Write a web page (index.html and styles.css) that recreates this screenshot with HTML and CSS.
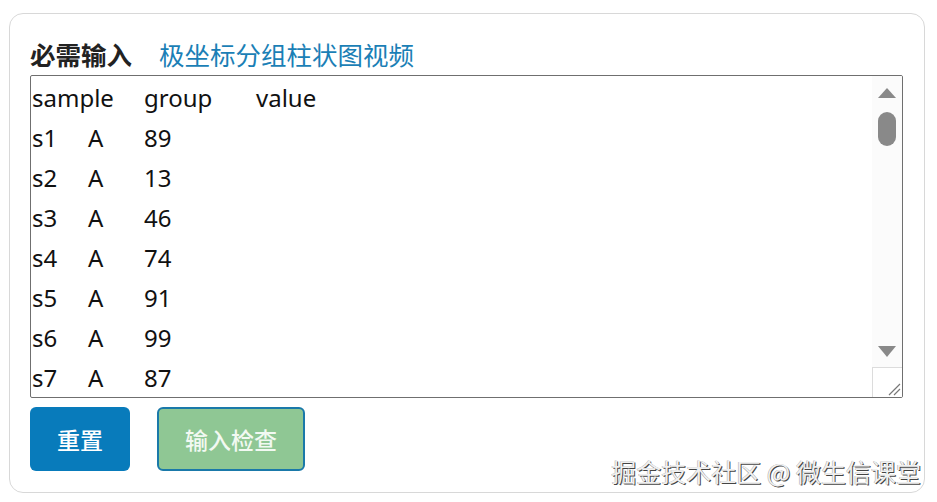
FILE: index.html
```html
<!DOCTYPE html>
<html lang="zh">
<head>
<meta charset="utf-8">
<title>必需输入</title>
<link rel="stylesheet" href="styles.css">
</head>
<body>
<div class="page">
  <div class="card">
    <div class="head">
      <span class="req">必需输入</span>
      <span class="title">极坐标分组柱状图视频</span>
    </div>
    <div class="textarea">
      <pre class="content">sample	group	value
s1	A	89
s2	A	13
s3	A	46
s4	A	74
s5	A	91
s6	A	99
s7	A	87</pre>
      <div class="scrollbar">
        <svg class="arrow up" width="18" height="10" viewBox="0 0 18 10"><path d="M9 0 L18 10 L0 10 Z" fill="#898989"/></svg>
        <div class="thumb"></div>
        <div class="spacer"></div>
        <svg class="arrow down" width="18" height="11" viewBox="0 0 18 11"><path d="M0 0 L18 0 L9 11 Z" fill="#898989"/></svg>
        <div class="corner">
          <svg width="29" height="29" viewBox="0 0 29 29"><path d="M16 27 L27 16 M21 27 L27 21" stroke="#777" stroke-width="1.2"/></svg>
        </div>
      </div>
    </div>
    <div class="actions">
      <button class="btn btn-reset">重置</button>
      <button class="btn btn-check">输入检查</button>
    </div>
    <div class="watermark">掘金技术社区 @ 微生信课堂</div>
  </div>
</div>
</body>
</html>
```
FILE: styles.css
```css
html, body {
  margin: 0;
  padding: 0;
  background: #ffffff;
}
.page {
  padding: 13px 0 0 9px;
}
.card {
  position: relative;
  box-sizing: border-box;
  width: 916px;
  height: 480px;
  border: 1.5px solid #d8d8d8;
  border-radius: 14px;
  padding: 25px 20px 0 20px;
  font-family: "Noto Sans", "Noto Sans CJK SC", sans-serif;
}
.head {
  display: flex;
  align-items: center;
  height: 30px;
  line-height: 30px;
  margin-bottom: 6px;
  font-family: "Noto Sans CJK SC", sans-serif;
  font-size: 25.5px;
}
.req {
  font-weight: 700;
  color: #222;
  margin-right: 27px;
}
.title {
  color: #1b7fb6;
}
.textarea {
  box-sizing: border-box;
  display: flex;
  width: 873px;
  height: 323px;
  border: 1px solid #6f6f6f;
  border-radius: 2px;
  overflow: hidden;
  background: #fff;
}
.content {
  flex: 1;
  margin: 0;
  padding: 2px 0 0 1px;
  font-family: "Noto Sans", sans-serif;
  font-size: 24px;
  line-height: 40px;
  color: #111;
  tab-size: 56px;
  -moz-tab-size: 56px;
  white-space: pre;
  overflow: hidden;
}
.scrollbar {
  width: 30px;
  display: flex;
  flex-direction: column;
  align-items: center;
  background: #fbfbfb;
  padding-top: 12px;
  box-sizing: border-box;
}
.arrow {
  display: block;
  flex: none;
}
.thumb {
  flex: none;
  width: 18px;
  height: 34px;
  margin-top: 14px;
  border-radius: 9px;
  background: #898989;
}
.spacer {
  flex: 1;
}
.arrow.down {
  margin-bottom: 10px;
}
.corner {
  flex: none;
  align-self: stretch;
  height: 30px;
  border-left: 1px solid #dcdcdc;
  border-top: 1px solid #dcdcdc;
  background: #fff;
  box-sizing: border-box;
}
.corner svg {
  display: block;
}
.actions {
  display: flex;
  gap: 27px;
  margin-top: 9px;
}
.btn {
  box-sizing: border-box;
  height: 64px;
  border-radius: 6px;
  font-family: "Noto Sans CJK SC", sans-serif;
  font-size: 23px;
  font-weight: 500;
  padding: 0 26px;
  cursor: pointer;
}
.btn-reset {
  width: 100px;
  background: #087bbb;
  color: #fff;
  border: none;
}
.btn-check {
  width: 148px;
  background: #8fc794;
  color: #f2f9f2;
  border: 2px solid #1a79a9;
}
.watermark {
  position: absolute;
  right: 3px;
  bottom: 6px;
  font-family: "Noto Sans CJK SC", sans-serif;
  font-size: 25px;
  line-height: 30px;
  color: #f0f0f0;
  text-shadow: 1px 1px 0.5px #444, -0.5px -0.5px 0 #aaa;
  white-space: nowrap;
}
```
